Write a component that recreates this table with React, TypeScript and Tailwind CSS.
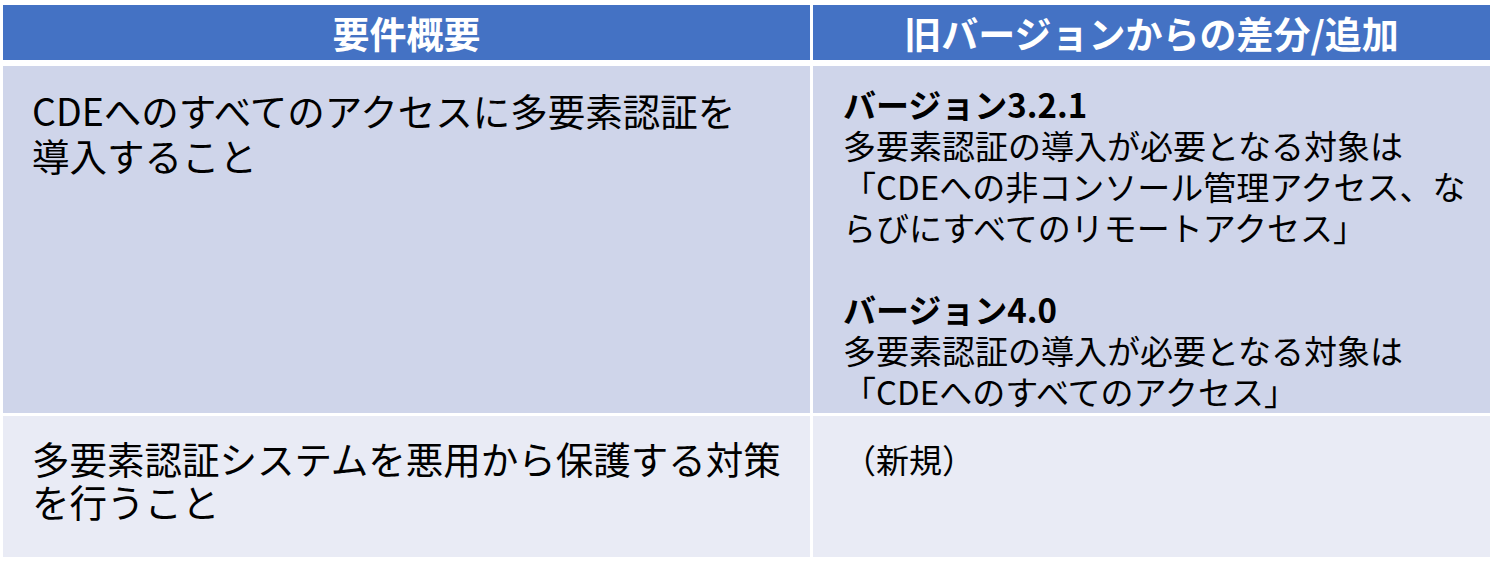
export default function App() {
  const font = { fontFamily: '"Noto Sans CJK JP", "Noto Sans", sans-serif' };
  return (
    <div className="w-[1496px] h-[561px] bg-white pt-[5px] pl-[3px]" style={font}>
      <div className="grid grid-cols-[807px_677px] gap-x-[3px] w-[1487px]">
        {/* header */}
        <div className="h-[55px] bg-[#4472c4] flex items-center justify-center text-white font-bold text-[37px] leading-[44px]">
          要件概要
        </div>
        <div className="h-[55px] bg-[#4472c4] flex items-center justify-center text-white font-bold text-[37px] leading-[44px]">
          旧バージョンからの差分/追加
        </div>

        {/* row 1 */}
        <div className="mt-[6px] h-[347px] bg-[#cfd5ea] pl-[29px] pt-[21px] text-[37.5px] leading-[45px] text-black">
          CDEへのすべてのアクセスに多要素認証を
          <br />
          導入すること
        </div>
        <div className="mt-[6px] h-[347px] bg-[#cfd5ea] pl-[30px] pt-[18px] text-[33px] leading-[41px] text-black">
          <div className="font-bold">バージョン3.2.1</div>
          <div>多要素認証の導入が必要となる対象は</div>
          <div>「CDEへの非コンソール管理アクセス、な</div>
          <div>らびにすべてのリモートアクセス」</div>
          <div className="h-[41px]" />
          <div className="font-bold">バージョン4.0</div>
          <div>多要素認証の導入が必要となる対象は</div>
          <div>「CDEへのすべてのアクセス」</div>
        </div>

        {/* row 2 */}
        <div className="mt-[3px] h-[141px] bg-[#e9ebf5] pl-[29px] pt-[20px] text-[37.5px] leading-[43px] text-black">
          多要素認証システムを悪用から保護する対策
          <br />
          を行うこと
        </div>
        <div className="mt-[3px] h-[141px] bg-[#e9ebf5] pl-[30px] pt-[23px] text-[33px] leading-[41px] text-black">
          （新規）
        </div>
      </div>
    </div>
  );
}
